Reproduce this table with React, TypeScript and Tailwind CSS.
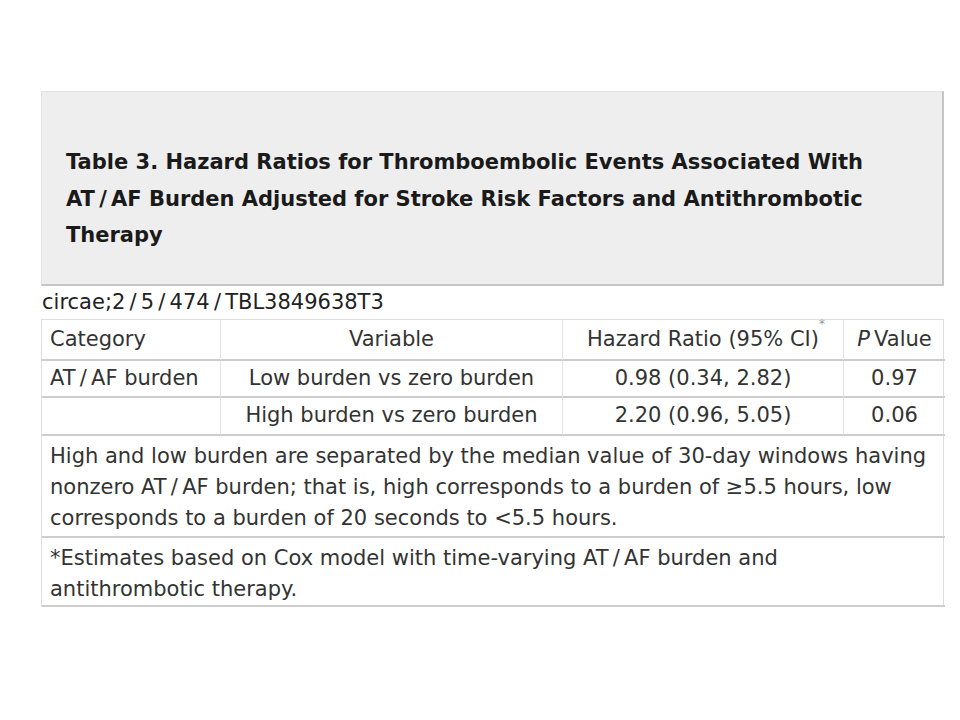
const ATAF = 'AT\u202F/\u202FAF'

export default function App() {
  const rows = [
    { cat: `${ATAF} burden`, v: 'Low burden vs zero burden', hr: '0.98 (0.34, 2.82)', p: '0.97', h: 'h-[37px]' },
    { cat: '', v: 'High burden vs zero burden', hr: '2.20 (0.96, 5.05)', p: '0.06', h: 'h-[38px]' },
  ]

  return (
    <div className="w-[960px] h-[720px] bg-white text-[#333] font-['DejaVu_Sans',sans-serif] pt-[91px] pl-[41px]">
      {/* Title box */}
      <div className="w-[903px] h-[195px] bg-[#eeeeee] border-t border-l border-[#e2e2e2] border-r-2 border-b-2 border-r-[#c6c6c6] border-b-[#c6c6c6] pl-[24px] pt-[52px]">
        <h1 className="w-[820px] text-[21px] font-bold leading-[36.5px] text-[#1a1a1a]">
          Table 3. Hazard Ratios for Thromboembolic Events Associated With {ATAF} Burden Adjusted for Stroke Risk Factors and Antithrombotic Therapy
        </h1>
      </div>

      <div className="text-[21px] leading-[33px] text-[#222] pl-px">
        {'circae;2\u202F/\u202F5\u202F/\u202F474\u202F/\u202FTBL3849638T3'}
      </div>

      {/* Table */}
      <div className="w-[903px] grid grid-cols-[178px_342px_281px_102px] border-t border-l border-r border-[#dedede] text-[21px]">
        <div className="h-[41px] flex items-center pl-[8px] border-b-2 border-[#cdcdcd]">Category</div>
        <div className="h-[41px] flex items-center justify-center border-l border-b-2 border-l-[#e3e3e3] border-b-[#cdcdcd]">Variable</div>
        <div className="h-[41px] flex items-center justify-center border-l border-b-2 border-l-[#e3e3e3] border-b-[#cdcdcd]">
          <span className="relative">
            Hazard Ratio (95%&nbsp;CI)
            <sup className="absolute -right-[6px] top-[0px] text-[12px] text-[#999]">*</sup>
          </span>
        </div>
        <div className="h-[41px] flex items-center justify-center border-l border-b-2 border-l-[#e3e3e3] border-b-[#cdcdcd]">
          <span><i>P</i>&thinsp;Value</span>
        </div>

        {rows.map((r, i) => (
          <div key={i} className="contents">
            <div className={`${r.h} flex items-center pl-[8px] border-b-2 border-[#cdcdcd]`}>{r.cat}</div>
            <div className={`${r.h} flex items-center justify-center border-l border-b-2 border-l-[#e3e3e3] border-b-[#cdcdcd]`}>{r.v}</div>
            <div className={`${r.h} flex items-center justify-center border-l border-b-2 border-l-[#e3e3e3] border-b-[#cdcdcd]`}>{r.hr}</div>
            <div className={`${r.h} flex items-center justify-center border-l border-b-2 border-l-[#e3e3e3] border-b-[#cdcdcd]`}>{r.p}</div>
          </div>
        ))}

        <div className="col-span-4 pl-[8px] pr-[6px] pt-[5px] pb-[2px] leading-[31px] border-b-2 border-[#cdcdcd]">
          High and low burden are separated by the median value of 30-day windows having nonzero {ATAF} burden; that is, high corresponds to a burden of ≥5.5 hours, low corresponds to a burden of 20 seconds to &lt;5.5 hours.
        </div>
        <div className="col-span-4 pl-[8px] pr-[60px] pt-[5px] leading-[31px] border-b-2 border-[#cdcdcd]">
          *Estimates based on Cox model with time-varying {ATAF} burden and antithrombotic therapy.
        </div>
      </div>
    </div>
  )
}
